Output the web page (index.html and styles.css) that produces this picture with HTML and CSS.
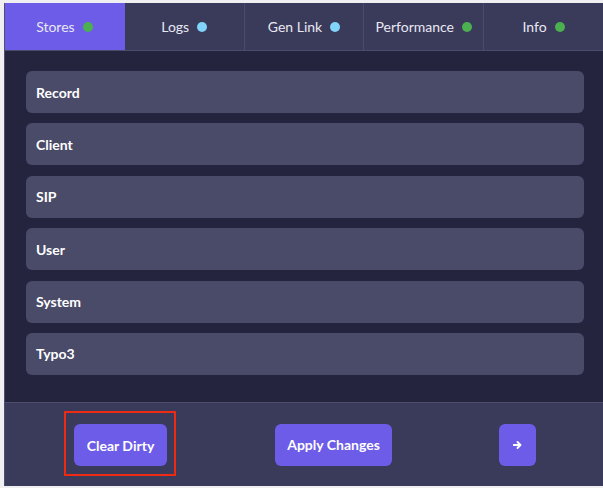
FILE: index.html
```html
<!DOCTYPE html>
<html lang="en">
<head>
<meta charset="utf-8">
<title>Stores</title>
<link rel="stylesheet" href="styles.css">
</head>
<body>
<div class="app">
  <nav class="tabs">
    <div class="tab active">Stores <span class="dot green"></span></div>
    <div class="tab">Logs <span class="dot blue"></span></div>
    <div class="tab">Gen Link <span class="dot blue"></span></div>
    <div class="tab">Performance <span class="dot green"></span></div>
    <div class="tab last">Info <span class="dot green"></span></div>
  </nav>
  <main class="content">
    <div class="item">Record</div>
    <div class="item">Client</div>
    <div class="item">SIP</div>
    <div class="item">User</div>
    <div class="item">System</div>
    <div class="item">Typo3</div>
  </main>
  <footer class="footer">
    <div class="highlight"><button class="btn btn-clear">Clear Dirty</button></div>
    <button class="btn btn-apply">Apply Changes</button>
    <button class="btn btn-next" aria-label="Next"><svg width="9" height="8" viewBox="0 0 9 8"><path d="M0.5 4H7.5M4.5 1L7.5 4L4.5 7" fill="none" stroke="#ffffff" stroke-width="1.8" stroke-linecap="round" stroke-linejoin="round"/></svg></button>
  </footer>
</div>
</body>
</html>
```
FILE: styles.css
```css
* { box-sizing: border-box; }
html, body { margin: 0; padding: 0; }
body {
  background: #f0f0f2;
  font-family: "Lato", "Liberation Sans", sans-serif;
  width: 603px;
  height: 488px;
  overflow: hidden;
}
.app {
  margin: 3px 0 0 4px;
  width: 599px;
  height: 483px;
  border-left: 1px solid #4f4e70;
  display: flex;
  flex-direction: column;
  background: #25243f;
}
.tabs {
  display: flex;
  height: 48px;
  border-bottom: 1px solid #4b4b6b;
  background: #3a3a5a;
}
.tab {
  flex: 1;
  display: flex;
  align-items: center;
  justify-content: center;
  gap: 8px;
  color: #e8e8f2;
  font-size: 14px;
  border-right: 1px solid #4a4a6a;
}
.tab.last { border-right: none; }
.tab.active { background: #6c5ce7; border-right-color: #6c5ce7; }
.dot {
  width: 10px;
  height: 10px;
  border-radius: 50%;
  display: inline-block;
}
.dot.green { background: #4caf50; }
.dot.blue { background: #81d4fa; }
.content {
  flex: 1;
  display: flex;
  flex-direction: column;
  gap: 10.4px;
  padding: 20px 19px 0 21px;
}
.item {
  height: 42px;
  border-radius: 6px;
  background: #4a4b69;
  color: #ffffff;
  font-weight: 700;
  font-size: 14px;
  display: flex;
  align-items: center;
  padding-left: 10px;
}
.footer {
  height: 84px;
  border-top: 1px solid #4e4e6e;
  background: #3a3a5a;
  display: flex;
  align-items: center;
  padding-left: 59px;
}
.highlight {
  border: 2px solid #ee2a12;
  padding: 11px 7px 8px 8px;
  margin-top: -2px;
}
.btn {
  height: 42px;
  border: none;
  border-radius: 6px;
  background: #6c5ce7;
  color: #ffffff;
  font-family: inherit;
  font-weight: 700;
  font-size: 14px;
  padding: 0;
  display: flex;
  align-items: center;
  justify-content: center;
}
.btn-clear { width: 93px; }
.btn-apply { width: 117px; margin-left: 99px; }
.btn-next { width: 37px; margin-left: 107px; }
```
